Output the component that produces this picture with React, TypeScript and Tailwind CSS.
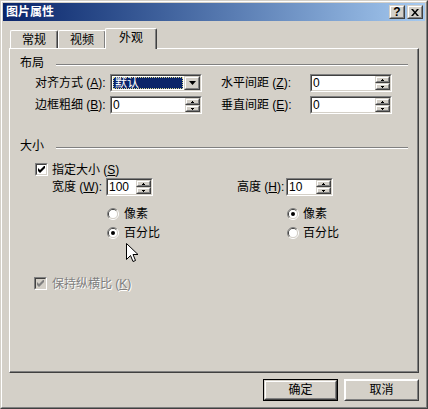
import React from "react";

const FONT = "[font-family:'Liberation_Sans','Noto_Sans_CJK_SC',sans-serif]";

function Sunken({ className = "", inner = "bg-white", children }: { className?: string; inner?: string; children?: React.ReactNode }) {
  return (
    <div className={`border border-t-[#808080] border-l-[#808080] border-b-white border-r-white ${className}`}>
      <div className={`flex h-full w-full border border-t-[#404040] border-l-[#404040] border-b-[#d4d0c8] border-r-[#d4d0c8] ${inner}`}>
        {children}
      </div>
    </div>
  );
}

function Raised({ className = "", children }: { className?: string; children?: React.ReactNode }) {
  return (
    <div className={`min-h-0 border border-t-[#d4d0c8] border-l-[#d4d0c8] border-b-[#404040] border-r-[#404040] bg-[#d4d0c8] ${className}`}>
      <div className="flex h-full w-full items-center justify-center border border-t-white border-l-white border-b-[#808080] border-r-[#808080]">
        {children}
      </div>
    </div>
  );
}

function Tri({ up = false, big = false }: { up?: boolean; big?: boolean }) {
  if (big) {
    return (
      <svg width="7" height="4" viewBox="0 0 7 4">
        <path d="M0 0h7L3.5 4z" fill="#000" />
      </svg>
    );
  }
  return (
    <svg width="3" height="2" viewBox="0 0 3 2">
      <path d={up ? "M1 0h1v1h1v1H0V1h1z" : "M0 0h3v1H2v1H1V1H0z"} fill="#000" />
    </svg>
  );
}

function SpinField({ value, w }: { value: string; w: string }) {
  return (
    <Sunken className={`${w} h-[18px]`}>
      <div className="flex-1 pl-[1px] text-[12px] leading-[14px] text-black">{value}</div>
      <div className="flex w-[15px] flex-col">
        <Raised className="flex-1">
          <Tri up />
        </Raised>
        <Raised className="flex-1">
          <Tri />
        </Raised>
      </div>
    </Sunken>
  );
}

function Check({ disabled = false }: { disabled?: boolean }) {
  return (
    <Sunken className="h-[13px] w-[13px] shrink-0" inner={disabled ? "bg-[#d4d0c8] items-center justify-center" : "bg-white items-center justify-center"}>
      <svg width="7" height="7" viewBox="0 0 7 7">
        <path d="M0 2L2 4L7 -1V2L2 7L0 5Z" fill={disabled ? "#808080" : "#000"} />
      </svg>
    </Sunken>
  );
}

function Radio({ checked = false }: { checked?: boolean }) {
  return (
    <svg width="12" height="12" viewBox="0 0 12 12" className="shrink-0">
      <path d="M9.9 2.1A5.5 5.5 0 0 0 2.1 9.9" stroke="#808080" fill="none" />
      <path d="M9.9 2.1A5.5 5.5 0 0 1 2.1 9.9" stroke="#ffffff" fill="none" />
      <path d="M9.2 2.8A4.5 4.5 0 0 0 2.8 9.2" stroke="#404040" fill="none" />
      <path d="M9.2 2.8A4.5 4.5 0 0 1 2.8 9.2" stroke="#d4d0c8" fill="none" />
      <circle cx="6" cy="6" r="4" fill="#fff" />
      {checked && <circle cx="6" cy="6" r="2" fill="#000" />}
    </svg>
  );
}

function GroupHeader({ label, className }: { label: string; className: string }) {
  return (
    <div className={`flex h-[12px] ${className}`}>
      <span className="ml-[10px] leading-[12px]">{label}</span>
      <div className="ml-[12px] mt-[7px] h-[2px] flex-1 border-t border-b border-t-[#808080] border-b-white" />
    </div>
  );
}

function Tab({ label, active = false, className = "" }: { label: string; active?: boolean; className?: string }) {
  return (
    <div
      className={`flex items-center justify-center rounded-t-[2px] border-t border-l border-r border-t-white border-l-white border-r-[#404040] bg-[#d4d0c8] shadow-[inset_-1px_0_0_#808080] ${
        active ? "relative z-10 -mb-[1px] h-[21px] pb-[2px]" : "h-[18px]"
      } ${className}`}
    >
      <span className="leading-[12px]">{label}</span>
    </div>
  );
}

function Cursor() {
  return (
    <svg width="13" height="21" viewBox="0 0 13 21" className="absolute left-[125px] top-[242px] z-20">
      <path d="M0.5 0.5V16.5L4.5 12.5L7 18.5L9.5 17.5L7 11.5H12Z" fill="#fff" stroke="#000" strokeLinejoin="miter" />
    </svg>
  );
}

export default function App() {
  return (
    <div className={`relative h-[409px] w-[428px] border border-t-[#d4d0c8] border-l-[#d4d0c8] border-b-[#404040] border-r-[#404040] bg-[#d4d0c8] text-[12px] text-black ${FONT}`}>
      <div className="flex h-full w-full flex-col border border-t-white border-l-white border-b-[#808080] border-r-[#808080] p-[1px]">
        {/* title bar */}
        <div className="flex h-[18px] items-center bg-linear-to-r from-[#0a246a] to-[#a6caf0] pl-[3px] pr-[2px]">
          <span className="flex-1 text-[12px] font-bold leading-[12px] text-white">图片属性</span>
          <Raised className="h-[14px] w-[16px]">
            <span className="text-[12px] font-bold leading-[10px]">?</span>
          </Raised>
          <Raised className="ml-[2px] h-[14px] w-[16px]">
            <svg width="8" height="7" viewBox="0 0 8 7">
              <path d="M0 0h2l2 2.5L6 0h2L5 3.5L8 7H6L4 4.5L2 7H0l3-3.5z" fill="#000" />
            </svg>
          </Raised>
        </div>

        <div className="flex flex-1 flex-col px-[6px] pt-[7px]">
          {/* tabs */}
          <div className="flex h-[20px] items-end pl-[1px]">
            <Tab label="常规" className="w-[48px]" />
            <Tab label="视频" className="w-[48px]" />
            <Tab label="外观" active className="-ml-[1px] w-[52px]" />
          </div>

          {/* panel */}
          <div className="h-[325px] border border-t-white border-l-white border-b-[#404040] border-r-[#404040]">
            <div className="flex h-full w-full flex-col border-r border-b border-r-[#808080] border-b-[#808080] pr-[9px]">
              <GroupHeader label="布局" className="mt-[8px]" />

              <div className="ml-[25px] mt-[5px] flex h-[18px] items-center">
                <span className="w-[75px] leading-[12px]">
                  对齐方式 (<u>A</u>):
                </span>
                <Sunken className="h-[18px] w-[92px]">
                  <div className="flex-1 p-[1px]">
                    <div className="h-full border border-dotted border-[#d8d890] bg-[#0a246a] pl-[1px] leading-[11px] text-white">默认</div>
                  </div>
                  <Raised className="w-[16px]">
                    <Tri big />
                  </Raised>
                </Sunken>
                <span className="ml-[19px] w-[89px] leading-[12px]">
                  水平间距 (<u>Z</u>):
                </span>
                <SpinField value="0" w="w-[82px]" />
              </div>

              <div className="ml-[25px] mt-[4px] flex h-[18px] items-center">
                <span className="w-[75px] leading-[12px]">
                  边框粗细 (<u>B</u>):
                </span>
                <SpinField value="0" w="w-[92px]" />
                <span className="ml-[19px] w-[89px] leading-[12px]">
                  垂直间距 (<u>E</u>):
                </span>
                <SpinField value="0" w="w-[82px]" />
              </div>

              <GroupHeader label="大小" className="mt-[26px]" />

              <div className="ml-[25px] mt-[11px] flex h-[13px] items-center">
                <Check />
                <span className="ml-[4px] leading-[12px]">
                  指定大小 (<u>S</u>)
                </span>
              </div>

              <div className="ml-[42px] mt-[2px] flex h-[18px] items-center">
                <span className="w-[54px] leading-[12px]">
                  宽度 (<u>W</u>):
                </span>
                <SpinField value="100" w="w-[47px]" />
                <span className="ml-[84px] w-[49px] leading-[12px]">
                  高度 (<u>H</u>):
                </span>
                <SpinField value="10" w="w-[47px]" />
              </div>

              <div className="ml-[97px] mt-[12px] flex h-[12px] items-center">
                <div className="flex w-[180px] items-center">
                  <Radio />
                  <span className="ml-[5px] leading-[12px]">像素</span>
                </div>
                <Radio checked />
                <span className="ml-[4px] leading-[12px]">像素</span>
              </div>

              <div className="ml-[97px] mt-[7px] flex h-[12px] items-center">
                <div className="flex w-[180px] items-center">
                  <Radio checked />
                  <span className="ml-[5px] leading-[12px]">百分比</span>
                </div>
                <Radio />
                <span className="ml-[4px] leading-[12px]">百分比</span>
              </div>

              <div className="ml-[24px] mt-[38px] flex h-[13px] items-center">
                <Check disabled />
                <span className="ml-[5px] leading-[12px] text-[#808080] [text-shadow:1px_1px_0_#fff]">
                  保持纵横比 (<u>K</u>)
                </span>
              </div>
            </div>
          </div>

          {/* buttons */}
          <div className="mt-[6px] flex justify-end gap-[6px]">
            <div className="h-[22px] w-[75px] border border-black">
              <Raised className="h-full w-full">
                <span className="leading-[12px]">确定</span>
              </Raised>
            </div>
            <Raised className="h-[22px] w-[75px] border-t-white border-l-white">
              <span className="leading-[12px]">取消</span>
            </Raised>
          </div>
        </div>
      </div>
      <Cursor />
    </div>
  );
}
